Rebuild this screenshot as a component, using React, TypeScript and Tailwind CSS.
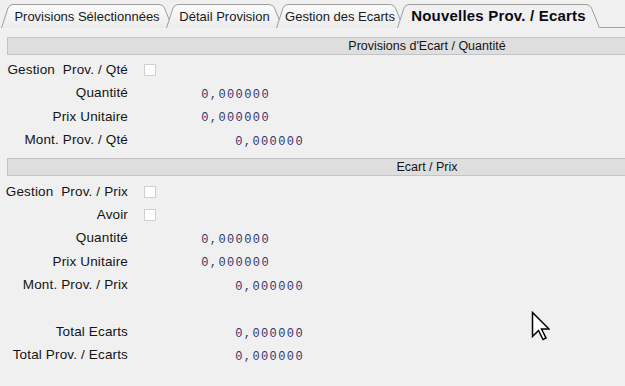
import React from "react";

type TabDef = { label: string; w: number; cls: string; active?: boolean };

const tabs: TabDef[] = [
  { label: "Provisions Sélectionnées", w: 172, cls: "w-[172px] ml-[1px]" },
  { label: "Détail Provision", w: 117, cls: "w-[117px] -ml-[7px]" },
  { label: "Gestion des Ecarts", w: 128, cls: "w-[128px] -ml-[7px]" },
  { label: "Nouvelles Prov. / Ecarts", w: 203, cls: "w-[203px] -ml-[7px]", active: true },
];

function Tab({ t, idx }: { t: TabDef; idx: number }) {
  const W = t.w;
  const H = 24;
  const d = `M0.5 ${H} L7 4 Q8.5 0.5 12 0.5 L${W - 14} 0.5 Q${W - 10} 0.5 ${W - 8.5} 4 L${W - 0.5} ${H}`;
  return (
    <div className={`relative h-[24px] shrink-0 flex items-center justify-center ${t.cls}`}>
      <svg className="absolute inset-0" width={W} height={H} viewBox={`0 0 ${W} ${H}`}>
        <defs>
          <linearGradient id={`g${idx}`} x1="0" y1="0" x2="0" y2="1">
            <stop offset="0" stopColor="#fbfbfb" />
            <stop offset="1" stopColor="#ececec" />
          </linearGradient>
        </defs>
        <path d={d + " Z"} fill={t.active ? "#f0f0f0" : `url(#g${idx})`} stroke="none" />
        <path d={d} fill="none" stroke="#9e9e9e" strokeWidth="1" />
      </svg>
      <span
        className={
          t.active
            ? "relative pt-[1px] text-[15px] font-bold tracking-[0.2px] text-[#0a0a14] whitespace-nowrap"
            : "relative pt-[1px] text-[13px] text-[#1a1a1a] whitespace-nowrap"
        }
      >
        {t.label}
      </span>
    </div>
  );
}

function Row({ label, children, h = "h-[23.5px]" }: { label: string; children?: React.ReactNode; h?: string }) {
  return (
    <div className={`flex items-center ${h}`}>
      <div className="w-[128px] text-right whitespace-pre text-[13.5px] tracking-[0.15px] text-[#141414]">{label}</div>
      {children}
    </div>
  );
}

function Check() {
  return <div className="ml-[16px] w-[12px] h-[12px] bg-white border border-[#cfcfcf]" />;
}

function ValShort() {
  return (
    <div className="w-[142px] pt-[3px] text-right text-[12px] tracking-[1.4px] text-[#35356a] font-['Liberation_Mono',monospace]">
      0,000000
    </div>
  );
}

function ValLong() {
  return (
    <div className="w-[176px] pt-[3px] text-right text-[12px] tracking-[1.4px] text-[#35356a] font-['Liberation_Mono',monospace]">
      0,000000
    </div>
  );
}

function Header({ text, cls }: { text: string; cls: string }) {
  return (
    <div className={`ml-[7px] w-[840px] h-[18px] bg-[#dedede] border border-[#c4c4c4] flex items-center justify-center text-[12.5px] text-[#141414] ${cls}`}>
      {text}
    </div>
  );
}

export default function App() {
  return (
    <div className="relative w-[625px] h-[386px] overflow-hidden bg-[#f0f0f0] font-['Liberation_Sans',Arial,sans-serif]">
      {/* tab strip */}
      <div className="flex items-end h-[28px]">
        {tabs.map((t, i) => (
          <Tab key={i} t={t} idx={i} />
        ))}
        <div className="flex-1 h-[24px] border-b border-[#a0a0a0]" />
      </div>

      <Header text="Provisions d'Ecart / Quantité" cls="mt-[9px]" />
      <div className="mt-[3px]">
        <Row label="Gestion  Prov. / Qté">
          <Check />
        </Row>
        <Row label="Quantité">
          <ValShort />
        </Row>
        <Row label="Prix Unitaire">
          <ValShort />
        </Row>
        <Row label="Mont. Prov. / Qté">
          <ValLong />
        </Row>
      </div>

      <Header text="Ecart / Prix" cls="mt-[6px]" />
      <div className="mt-[4px]">
        <Row label="Gestion  Prov. / Prix" h="h-[23.4px]">
          <Check />
        </Row>
        <Row label="Avoir" h="h-[23.4px]">
          <Check />
        </Row>
        <Row label="Quantité" h="h-[23.4px]">
          <ValShort />
        </Row>
        <Row label="Prix Unitaire" h="h-[23.4px]">
          <ValShort />
        </Row>
        <Row label="Mont. Prov. / Prix" h="h-[23.4px]">
          <ValLong />
        </Row>
        <div className="h-[23.4px]" />
        <Row label="Total Ecarts" h="h-[23.4px]">
          <ValLong />
        </Row>
        <Row label="Total Prov. / Ecarts" h="h-[23.4px]">
          <ValLong />
        </Row>
      </div>

      {/* mouse cursor overlay */}
      <svg className="absolute left-[531px] top-[311px]" width="19" height="30" viewBox="0 0 19 30">
        <path
          d="M1.5 1.5 L1.5 25.5 L7.5 19.5 L12 28.5 L15 27 L10.5 18 L18 18 Z"
          fill="#ffffff"
          stroke="#000000"
          strokeWidth="1.5"
          strokeLinejoin="miter"
        />
      </svg>
    </div>
  );
}
